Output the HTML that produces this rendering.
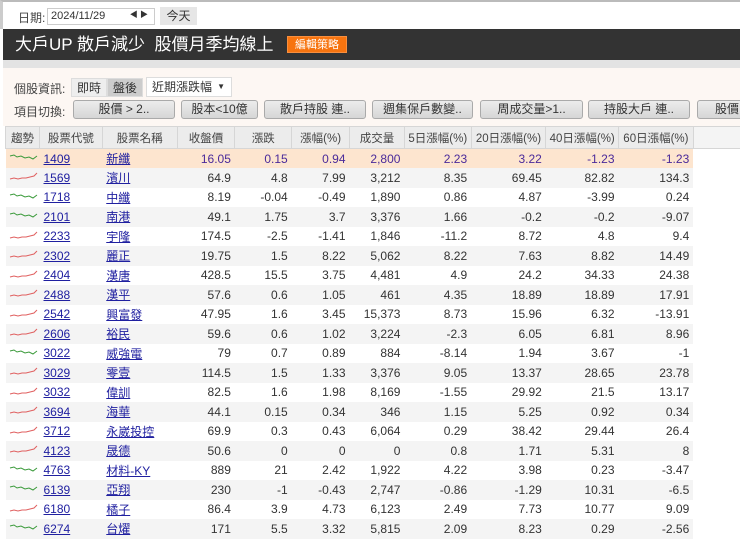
<!DOCTYPE html>
<html><head><meta charset="utf-8">
<style>
*{margin:0;padding:0;box-sizing:border-box}
body{width:740px;height:552px;overflow:hidden;background:#fff;font-family:"Liberation Sans","Noto Sans CJK TC",sans-serif;font-size:12px;color:#333;position:relative}
.abs{position:absolute}
.top{left:0;top:0;width:740px;height:29px;border-top:2px solid #bbb;border-left:3px solid #ccc;background:#fff}
.inp{left:47px;top:8px;width:108px;height:17px;border:1px solid #ccc;font-size:11px;padding:1px 3px;color:#333}
.btoday{left:160px;top:7px;width:37px;height:18px;background:#e6e6e6;text-align:center;line-height:18px;font-size:12px}
.title{left:3px;top:29px;width:737px;height:31px;background:#333;color:#fff;font-size:17px;line-height:31px;padding-left:12px;white-space:pre}
.edit{left:287px;top:36px;width:60px;height:17px;background:#f7740f;border:1px solid #fff3;color:#fff;font-size:11px;text-align:center;line-height:16px}
.strip{left:3px;top:60px;width:737px;height:8px;background:#e3e3e3}
.pink{left:3px;top:68px;width:737px;height:58px;background:#fdf7f3}
.lab{font-size:12px;color:#444}
.tog{top:78px;height:19px;line-height:19px;font-size:12px;text-align:center;background:#eee;border:1px solid #ddd}
.dd{left:146px;top:77px;width:86px;height:20px;border:1px solid #ddd;background:#fff;line-height:18px;padding-left:5px}
.btn{top:100px;height:19px;line-height:17px;text-align:center;background:linear-gradient(#ececec,#d6d6d6);border:1px solid #aaa;border-radius:3px;font-size:12px;color:#333}
table{position:absolute;left:5px;top:126px;border-collapse:collapse;table-layout:fixed}
th{height:22px;background:#ececec;border:1px solid #d6d6d6;font-weight:normal;font-size:11.5px;color:#444}
td{height:19.5px;padding:0 4px;text-align:right;font-size:12px;white-space:nowrap}
tr:nth-child(even) td{background:#f4f4f4}
tr.hl td{background:#fde5cf!important;color:#4a2a9a}
td.l{text-align:left}
a{color:#2020a0;text-decoration:underline}
</style></head><body>
<div class="abs top"></div>
<div class="abs lab" style="left:18px;top:9px">日期:</div>
<div class="abs inp">2024/11/29<span style="position:absolute;right:6px;top:0;font-size:8px">◀ ▶</span></div>
<div class="abs btoday">今天</div>
<div class="abs title">大戶UP 散戶減少  股價月季均線上</div>
<div class="abs edit">編輯策略</div>
<div class="abs strip"></div>
<div class="abs pink"></div>
<div class="abs lab" style="left:14px;top:80px">個股資訊:</div>
<div class="abs tog" style="left:71px;width:36px">即時</div>
<div class="abs tog" style="left:107px;width:36px;background:#ccc">盤後</div>
<div class="abs dd">近期漲跌幅<span style="position:absolute;right:6px;font-size:8px">▼</span></div>
<div class="abs lab" style="left:14px;top:103px">項目切換:</div>
<div class="abs btn" style="left:73px;width:102px">股價 &gt; 2..</div>
<div class="abs btn" style="left:181px;width:77px">股本&lt;10億</div>
<div class="abs btn" style="left:264px;width:102px">散戶持股 連..</div>
<div class="abs btn" style="left:372px;width:101px">週集保戶數變..</div>
<div class="abs btn" style="left:480px;width:103px">周成交量&gt;1..</div>
<div class="abs btn" style="left:588px;width:102px">持股大戶 連..</div>
<div class="abs btn" style="left:697px;width:60px">股價</div>
<table>
<colgroup><col style="width:32px"><col style="width:63px"><col style="width:75px"><col style="width:58px"><col style="width:57px"><col style="width:58px"><col style="width:55px"><col style="width:67px"><col style="width:75px"><col style="width:73px"><col style="width:75px"><col style="width:47px"></colgroup>
<tr><th>趨勢</th><th>股票代號</th><th>股票名稱</th><th>收盤價</th><th>漲跌</th><th>漲幅(%)</th><th>成交量</th><th>5日漲幅(%)</th><th>20日漲幅(%)</th><th>40日漲幅(%)</th><th>60日漲幅(%)</th><th style="background:#f4f4f4;border-right:none"></th></tr>
<tbody id="tb"></tbody>
</table>
<script>
var d=[["g","1409","新纖","16.05","0.15","0.94","2,800","2.23","3.22","-1.23","-1.23"],
["r","1569","濱川","64.9","4.8","7.99","3,212","8.35","69.45","82.82","134.3"],
["g","1718","中纖","8.19","-0.04","-0.49","1,890","0.86","4.87","-3.99","0.24"],
["g","2101","南港","49.1","1.75","3.7","3,376","1.66","-0.2","-0.2","-9.07"],
["r","2233","宇隆","174.5","-2.5","-1.41","1,846","-11.2","8.72","4.8","9.4"],
["r","2302","麗正","19.75","1.5","8.22","5,062","8.22","7.63","8.82","14.49"],
["r","2404","漢唐","428.5","15.5","3.75","4,481","4.9","24.2","34.33","24.38"],
["r","2488","漢平","57.6","0.6","1.05","461","4.35","18.89","18.89","17.91"],
["r","2542","興富發","47.95","1.6","3.45","15,373","8.73","15.96","6.32","-13.91"],
["r","2606","裕民","59.6","0.6","1.02","3,224","-2.3","6.05","6.81","8.96"],
["g","3022","威強電","79","0.7","0.89","884","-8.14","1.94","3.67","-1"],
["r","3029","零壹","114.5","1.5","1.33","3,376","9.05","13.37","28.65","23.78"],
["r","3032","偉訓","82.5","1.6","1.98","8,169","-1.55","29.92","21.5","13.17"],
["r","3694","海華","44.1","0.15","0.34","346","1.15","5.25","0.92","0.34"],
["r","3712","永崴投控","69.9","0.3","0.43","6,064","0.29","38.42","29.44","26.4"],
["r","4123","晟德","50.6","0","0","0","0.8","1.71","5.31","8"],
["g","4763","材料-KY","889","21","2.42","1,922","4.22","3.98","0.23","-3.47"],
["g","6139","亞翔","230","-1","-0.43","2,747","-0.86","-1.29","10.31","-6.5"],
["r","6180","橘子","86.4","3.9","4.73","6,123","2.49","7.73","10.77","9.09"],
["g","6274","台燿","171","5.5","3.32","5,815","2.09","8.23","0.29","-2.56"]];
var h="";d.forEach(function(r,i){
var c=r[0]=="g"?"#3a9a3a":"#e06060";
var p=r[0]=="g"?"M2,5 L6,4 L9,6 L13,5 L17,7 L21,6 L25,8 L29,5":"M2,9 L6,8 L10,9 L14,8 L18,8 L22,7 L26,6 L29,3";
h+='<tr'+(i==0?' class="hl"':'')+'><td class="l" style="padding:0 2px"><svg width="30" height="12"><path d="'+p+'" fill="none" stroke="'+c+'" stroke-width="1"/></svg></td><td class="l"><a>'+r[1]+'</a></td><td class="l"><a>'+r[2]+'</a></td>';
for(var k=3;k<11;k++)h+='<td>'+r[k]+'</td>';
h+='<td style="background:#fff!important"></td></tr>';});
document.getElementById("tb").innerHTML=h;
</script>
</body></html>
